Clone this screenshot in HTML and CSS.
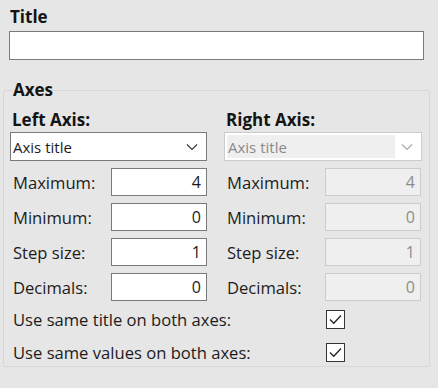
FILE: index.html
```html
<!DOCTYPE html>
<html>
<head>
<meta charset="utf-8">
<link rel="stylesheet" href="styles.css">
</head>
<body>
<div class="panel">
  <div class="heading title-heading">Title</div>
  <div class="textbox title-box"></div>
  <fieldset class="group">
    <legend class="heading">Axes</legend>
    <div class="axes">
      <div class="axis">
        <div class="heading axis-heading">Left Axis:</div>
        <div class="combo">
          <span class="combo-text">Axis title</span>
          <svg class="chev" width="12" height="8" viewBox="0 0 12 8"><path d="M1 1.5 L6 6.5 L11 1.5" fill="none" stroke="#333" stroke-width="1.1"/></svg>
        </div>
        <div class="row"><span class="lbl">Maximum:</span><div class="num">4</div></div>
        <div class="row"><span class="lbl">Minimum:</span><div class="num">0</div></div>
        <div class="row"><span class="lbl">Step size:</span><div class="num">1</div></div>
        <div class="row"><span class="lbl">Decimals:</span><div class="num">0</div></div>
      </div>
      <div class="axis">
        <div class="heading axis-heading">Right Axis:</div>
        <div class="combo disabled">
          <span class="combo-text">Axis title</span>
          <svg class="chev" width="12" height="8" viewBox="0 0 12 8"><path d="M1 1.5 L6 6.5 L11 1.5" fill="none" stroke="#a8a8a8" stroke-width="1.1"/></svg>
        </div>
        <div class="row"><span class="lbl">Maximum:</span><div class="num disabled">4</div></div>
        <div class="row"><span class="lbl">Minimum:</span><div class="num disabled">0</div></div>
        <div class="row"><span class="lbl">Step size:</span><div class="num disabled">1</div></div>
        <div class="row"><span class="lbl">Decimals:</span><div class="num disabled">0</div></div>
      </div>
    </div>
    <div class="check-row"><span class="lbl">Use same title on both axes:</span><span class="check"><svg width="13" height="11" viewBox="0 0 13 11"><path d="M1 5.5 L4.8 9.2 L12 1.5" fill="none" stroke="#222" stroke-width="1.3"/></svg></span></div>
    <div class="check-row"><span class="lbl">Use same values on both axes:</span><span class="check"><svg width="13" height="11" viewBox="0 0 13 11"><path d="M1 5.5 L4.8 9.2 L12 1.5" fill="none" stroke="#222" stroke-width="1.3"/></svg></span></div>
  </fieldset>
</div>
</body>
</html>
```

FILE: styles.css
```css
html, body {
  margin: 0;
  padding: 0;
  background: #e6e6e6;
}
body {
  width: 438px;
  height: 388px;
  overflow: hidden;
  font-family: "Open Sans", "Noto Sans", sans-serif;
  font-size: 16px;
  color: #1c1c1c;
}
.panel {
  padding: 6px 0 0 0;
}
.heading {
  font-weight: bold;
  font-size: 17px;
  color: #141414;
  line-height: 22px;
}
.title-heading {
  margin-left: 10px;
  height: 25px;
}
.textbox {
  background: #fff;
  border: 1px solid #7a7a7a;
  box-sizing: border-box;
}
.title-box {
  margin-left: 9px;
  width: 415px;
  height: 29px;
}
.group {
  margin: 19px 0 0 3px;
  width: 427px;
  height: 288px;
  box-sizing: border-box;
  border: 1px solid #d7d7d7;
  border-radius: 2px;
  padding: 0 0 0 6px;
  min-inline-size: auto;
}
.group legend {
  padding: 0;
  margin-left: 3px;
}
.axes {
  display: flex;
  gap: 17px;
  margin-top: 8px;
  margin-bottom: 2px;
}
.axis {
  width: 197px;
  display: flex;
  flex-direction: column;
}
.axis:last-child {
  width: 198px;
}
.axis-heading {
  margin-left: 2px;
  height: 22px;
  line-height: 22px;
}
.combo {
  margin-top: 1px;
  height: 29px;
  box-sizing: border-box;
  border: 1px solid #7a7a7a;
  background: #fff;
  display: flex;
  align-items: center;
  justify-content: space-between;
  padding: 0 8px 0 2px;
}
.combo-text {
  font-size: 15px;
  color: #1c1c1c;
}
.combo.disabled {
  border-color: #cccccc;
  padding: 2px 8px 2px 2px;
}
.combo.disabled .combo-text {
  background: #efefef;
  color: #8a8a8a;
  align-self: stretch;
  display: flex;
  align-items: center;
  width: 167px;
  padding-left: 1px;
}
.row {
  display: flex;
  align-items: center;
  justify-content: space-between;
  height: 28px;
  margin-top: 7px;
}
.axis .row:nth-of-type(1) {
  margin-top: 9px;
}
.lbl {
  font-size: 16.6px;
  margin-left: 3px;
  color: #1c1c1c;
}
.num {
  width: 96px;
  height: 28px;
  box-sizing: border-box;
  border: 1px solid #7a7a7a;
  background: #fff;
  text-align: right;
  padding-right: 5px;
  font-size: 16px;
  line-height: 26px;
}
.num.disabled {
  border-color: #cccccc;
  background: #efefef;
  color: #8d8d8d;
  margin-right: 1px;
}
.check-row {
  display: flex;
  align-items: center;
  height: 33px;
}
.check-row .lbl {
  width: 313px;
}
.check {
  width: 19px;
  height: 19px;
  box-sizing: border-box;
  border: 1px solid #333;
  background: #fff;
  display: flex;
  align-items: center;
  justify-content: center;
}
```
